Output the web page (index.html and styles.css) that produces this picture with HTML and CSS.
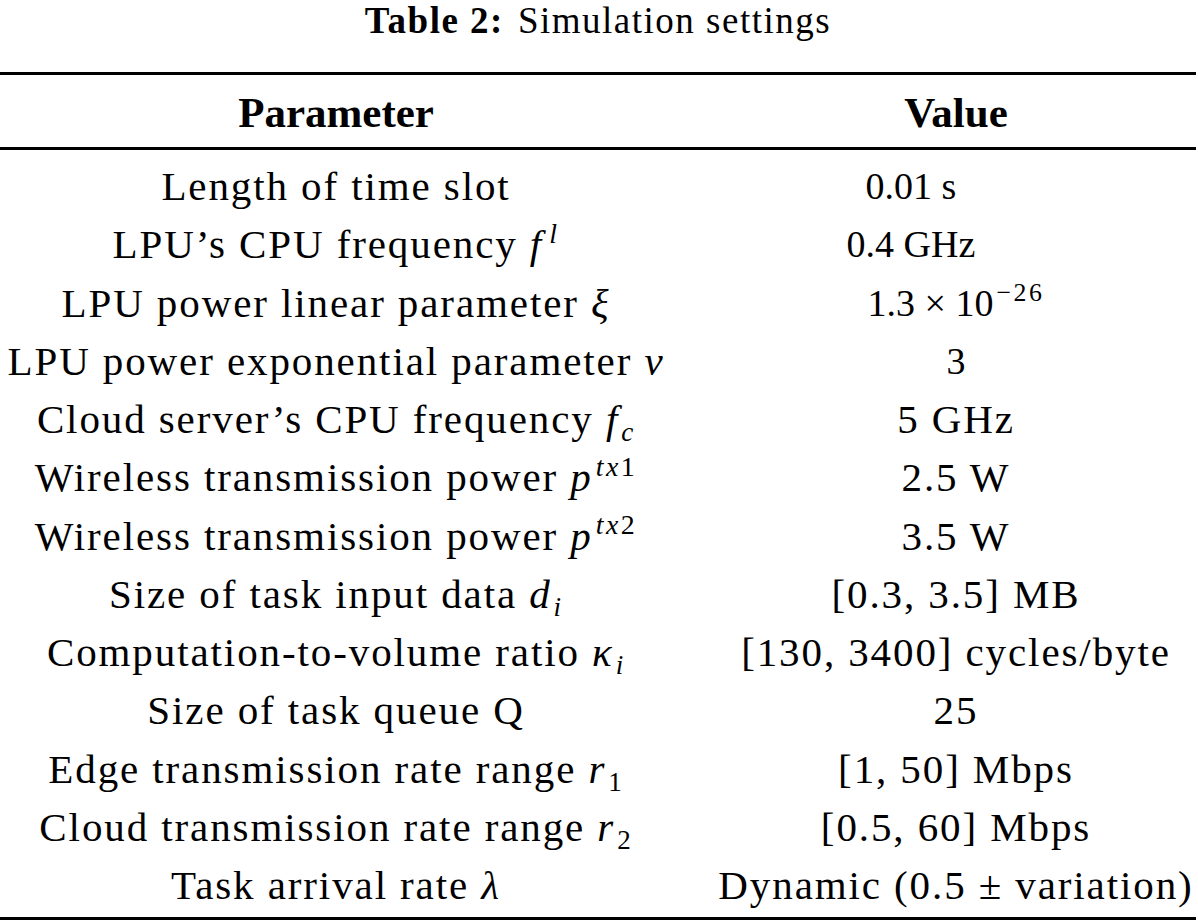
FILE: index.html
```html
<!DOCTYPE html>
<html lang="en">
<head>
<meta charset="utf-8">
<title>Table 2: Simulation settings</title>
<link rel="stylesheet" href="styles.css">
</head>
<body>
<div class="page">
  <div class="caption"><b class="cap-label">Table 2:</b><span class="cap-text">Simulation settings</span></div>
  <div class="table">
    <div class="row head">
      <div class="cell left">Parameter</div>
      <div class="cell right">Value</div>
    </div>
    <div class="body">
      <div class="row">
        <div class="cell left">Length of time slot</div>
        <div class="cell right shift num">0.01 s</div>
      </div>
      <div class="row">
        <div class="cell left">LPU’s CPU frequency <i class="m">f</i><sup class="sup sup-l"><i>l</i></sup></div>
        <div class="cell right shift num">0.4 GHz</div>
      </div>
      <div class="row">
        <div class="cell left">LPU power linear parameter <i class="m">ξ</i></div>
        <div class="cell right num">1.3 × 10<sup class="sup">−26</sup></div>
      </div>
      <div class="row">
        <div class="cell left">LPU power exponential parameter <i class="m">ν</i></div>
        <div class="cell right num">3</div>
      </div>
      <div class="row">
        <div class="cell left">Cloud server’s CPU frequency <i class="m">f</i><sub class="sub"><i>c</i></sub></div>
        <div class="cell right">5 GHz</div>
      </div>
      <div class="row">
        <div class="cell left">Wireless transmission power <i class="m">p</i><sup class="sup"><i>tx</i>1</sup></div>
        <div class="cell right">2.5 W</div>
      </div>
      <div class="row">
        <div class="cell left">Wireless transmission power <i class="m">p</i><sup class="sup"><i>tx</i>2</sup></div>
        <div class="cell right">3.5 W</div>
      </div>
      <div class="row">
        <div class="cell left">Size of task input data <i class="m">d</i><sub class="sub"><i>i</i></sub></div>
        <div class="cell right">[0.3, 3.5] MB</div>
      </div>
      <div class="row">
        <div class="cell left">Computation-to-volume ratio <i class="m">κ</i><sub class="sub"><i>i</i></sub></div>
        <div class="cell right">[130, 3400] cycles/byte</div>
      </div>
      <div class="row">
        <div class="cell left">Size of task queue Q</div>
        <div class="cell right">25</div>
      </div>
      <div class="row">
        <div class="cell left">Edge transmission rate range <i class="m">r</i><sub class="sub">1</sub></div>
        <div class="cell right">[1, 50] Mbps</div>
      </div>
      <div class="row">
        <div class="cell left">Cloud transmission rate range <i class="m">r</i><sub class="sub">2</sub></div>
        <div class="cell right">[0.5, 60] Mbps</div>
      </div>
      <div class="row">
        <div class="cell left">Task arrival rate <i class="m">λ</i></div>
        <div class="cell right">Dynamic (0.5 ± variation)</div>
      </div>
    </div>
  </div>
</div>
</body>
</html>
```
FILE: styles.css
```css
html, body {
  margin: 0;
  padding: 0;
  background: #ffffff;
  color: #000000;
  font-family: "Liberation Serif", "Times New Roman", serif;
}

.page {
  width: 1196px;
}

.caption {
  text-align: center;
  font-size: 37px;
  line-height: 40px;
  padding-top: 1px;
  margin-bottom: 31px;
  letter-spacing: 1.5px;
}

.cap-label {
  font-weight: bold;
  margin-right: 14px;
}

.table {
  border-top: 3px solid #000;
  border-bottom: 3px solid #000;
}

.row {
  display: grid;
  grid-template-columns: 672px 1fr;
  text-align: center;
  white-space: nowrap;
}

.head {
  font-weight: bold;
  font-size: 43px;
  line-height: 48px;
  padding: 14px 0 10px;
  border-bottom: 3px solid #000;
}

.body {
  padding: 7px 0 3px;
  font-size: 41px;
  line-height: 58.25px;
  letter-spacing: 1.9px;
}

.right {
  padding-left: 44px;
}

.shift {
  padding-right: 90px;
}

.num {
  font-size: 38px;
  letter-spacing: 0;
}

.m {
  font-style: italic;
}

.sup {
  font-size: 0.68em;
  line-height: 0;
  vertical-align: 0.55em;
  margin-left: 3px;
  letter-spacing: 2.5px;
}

.sup-l {
  margin-left: 6px;
}

.sub {
  font-size: 0.66em;
  line-height: 0;
  vertical-align: -0.3em;
  margin-left: 2px;
}
```
